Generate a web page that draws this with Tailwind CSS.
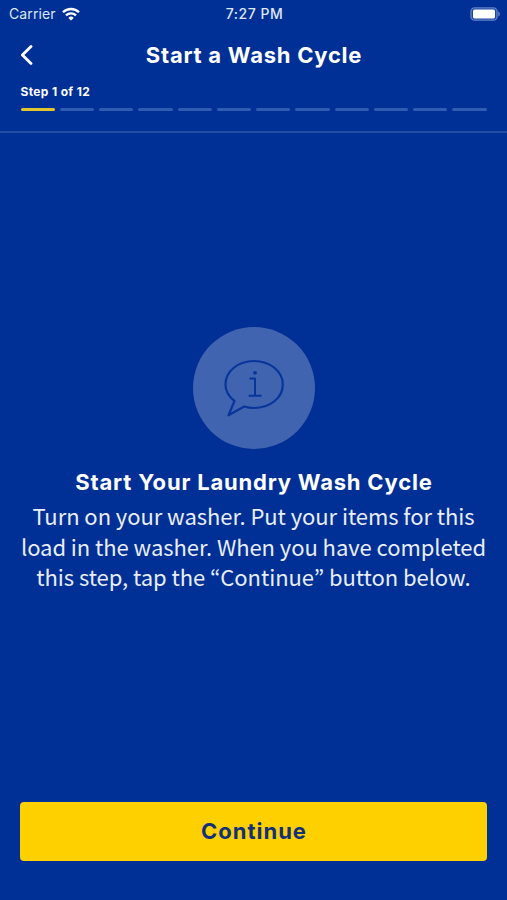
<!DOCTYPE html>
<html lang="en">

<head>
    <meta charset="UTF-8">
    <title>Start a Wash Cycle</title>
    <meta name="viewport" content="width=device-width, initial-scale=1.0">
    <script src="https://cdn.jsdelivr.net/npm/@tailwindcss/browser@4"></script>
</head>

<body class="bg-[#003096]">
    <div class="flex h-[900px] w-[507px] flex-col overflow-hidden bg-[#003096] font-['Inter',sans-serif] text-white">
        <!-- Status bar -->
        <div class="grid h-7 grid-cols-3 items-center pr-[7px] pl-[9px] text-[14px] leading-7 text-[#dfe6f7]">
            <div class="flex items-center gap-[6px]">
                <span class="tracking-[0.1px]">Carrier</span>
                <svg class="h-[14px] w-[18px]" viewBox="0 0 18 14" fill="none" stroke="#fff" stroke-width="2.3">
                    <path d="M1 5.3a11.4 11.4 0 0 1 16 0" />
                    <path d="M4 8.4a7.2 7.2 0 0 1 10 0" />
                    <path d="M9 13.6 6.3 10.9a3.9 3.9 0 0 1 5.4 0Z" fill="#fff" stroke="none" />
                </svg>
            </div>
            <span class="text-center font-medium tracking-[0.5px] whitespace-nowrap">7:27 PM</span>
            <svg class="h-[14px] w-[30px] justify-self-end" viewBox="0 0 30 14">
                <rect x="1" y=".9" width="26" height="12.2" rx="3.6" fill="#1c48a4" stroke="#5f80c4" stroke-width="1.4" />
                <rect x="3" y="2.6" width="22" height="8.8" rx="1.6" fill="#fff" />
                <path d="M28.2 4.6c2.3.8 2.3 4 0 4.8Z" fill="#5f80c4" />
            </svg>
        </div>

        <!-- Header -->
        <div class="h-[105px] border-b-2 border-[#2350a6] px-[20.5px]">
            <div class="grid h-[54px] grid-cols-[40px_1fr_40px] items-center">
                <svg class="h-[22px] w-[14px]" viewBox="0 0 14 22" fill="none" stroke="#fff" stroke-width="2.8" stroke-linecap="round" stroke-linejoin="round">
                    <path d="M10 2.4 1.4 11l8.6 8.6" />
                </svg>
                <h1 class="pl-px text-center text-[22px] font-bold tracking-[0.75px] whitespace-nowrap">Start a Wash Cycle</h1>
            </div>
            <p class="h-[26px] text-[12px] leading-[19px] font-bold tracking-[0.35px]">Step 1 of 12</p>
            <div class="grid grid-cols-12 gap-[5px]">
                <div class="h-[3px] rounded-full bg-[#e0c52f]"></div>
                <div class="h-[3px] rounded-full bg-[#2f5bb0]"></div>
                <div class="h-[3px] rounded-full bg-[#2f5bb0]"></div>
                <div class="h-[3px] rounded-full bg-[#2f5bb0]"></div>
                <div class="h-[3px] rounded-full bg-[#2f5bb0]"></div>
                <div class="h-[3px] rounded-full bg-[#2f5bb0]"></div>
                <div class="h-[3px] rounded-full bg-[#2f5bb0]"></div>
                <div class="h-[3px] rounded-full bg-[#2f5bb0]"></div>
                <div class="h-[3px] rounded-full bg-[#2f5bb0]"></div>
                <div class="h-[3px] rounded-full bg-[#2f5bb0]"></div>
                <div class="h-[3px] rounded-full bg-[#2f5bb0]"></div>
                <div class="h-[3px] rounded-full bg-[#2f5bb0]"></div>
            </div>
        </div>

        <!-- Content -->
        <div class="flex flex-1 flex-col items-center pt-[194px]">
            <div class="size-[122px] rounded-full bg-[#4164b1]">
                <svg class="size-[122px]" viewBox="0 0 122 122" fill="none" stroke="#08359a" stroke-width="2.2" stroke-linecap="round" stroke-linejoin="round">
                    <path d="M41.5 74C35.8 69.7 32.500 64 32.500 57.500 32.500 44.200 45.200 34 61 34s28.800 10.200 28.800 23.500S77 81 61 81c-3.500 0-6.800-.5-9.800-1.500L35.500 88.300Z" />
                    <path d="M57.300 51.500h4.700v17.300M56.500 68.800h11.300" stroke-width="2" />
                    <circle cx="62" cy="45.800" r="1.900" fill="#08359a" stroke="none" />
                </svg>
            </div>
            <h2 class="mt-[18px] pl-px text-[22px] leading-[30px] font-bold tracking-[0.8px] whitespace-nowrap">Start Your Laundry Wash Cycle</h2>
            <p class="mt-[3px] text-center font-['Noto_Sans_CJK_JP',sans-serif] text-[22px] leading-[30.7px] tracking-[-0.06px] whitespace-nowrap text-[#e9eefa]">Turn on your washer. Put your items for this<br>load in the washer. When you have completed<br>this step, tap the “Continue” button below.</p>
        </div>

        <!-- Action -->
        <div class="px-5 pb-[39px]">
            <button class="block h-[59px] w-full rounded-[4px] bg-[#ffd000] pl-px text-[22px] font-bold tracking-[1px] text-[#12307c]">Continue</button>
        </div>
    </div>
</body>

</html>
